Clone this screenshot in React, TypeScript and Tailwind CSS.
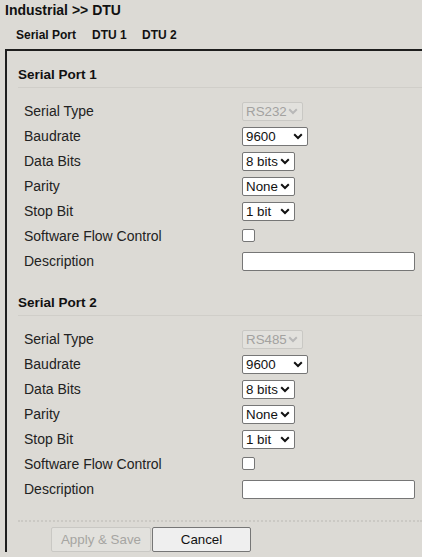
import React from "react";

const font = { fontFamily: '"Liberation Sans", Arial, sans-serif' };

function Chevron({ disabled }: { disabled?: boolean }) {
  return (
    <svg width="10" height="7" viewBox="0 0 10 7" className="shrink-0">
      <path
        d="M1.2 1.3 L5 5 L8.8 1.3"
        fill="none"
        stroke={disabled ? "#b8b8b8" : "#111"}
        strokeWidth="2"
      />
    </svg>
  );
}

function Select({ value, w, disabled }: { value: string; w: string; disabled?: boolean }) {
  return (
    <div
      className={
        "flex h-[19px] items-center justify-between rounded-[2px] border pl-[3px] pr-[4px] text-[13.33px] leading-none " +
        w +
        (disabled
          ? " border-[#c9c8c4] bg-[#e2e1dd] text-[#a3a2a0]"
          : " border-[#767676] bg-white text-[#111]")
      }
    >
      <span className="whitespace-pre">{value}</span>
      <Chevron disabled={disabled} />
    </div>
  );
}

function Row({ label, children }: { label: string; children: React.ReactNode }) {
  return (
    <div className="flex h-[25px] items-center">
      <div className="w-[224px] pl-[6px] text-[14px] text-[#222]">{label}</div>
      <div className="flex items-center">{children}</div>
    </div>
  );
}

function Section({ title, type }: { title: string; type: string }) {
  return (
    <div>
      <div className="border-b border-[#d0cec9] pb-[2px] text-[13.5px] font-bold leading-[20px] text-[#111]">
        {title}
      </div>
      <div className="mt-[11px]">
        <Row label="Serial Type">
          <Select value={type} w="w-[61px]" disabled />
        </Row>
        <Row label="Baudrate">
          <Select value="9600" w="w-[66px]" />
        </Row>
        <Row label="Data Bits">
          <Select value="8 bits" w="w-[53px]" />
        </Row>
        <Row label="Parity">
          <Select value="None" w="w-[53px]" />
        </Row>
        <Row label="Stop Bit">
          <Select value="1 bit" w="w-[53px]" />
        </Row>
        <Row label="Software Flow Control">
          <div className="mt-[-2px] h-[13px] w-[13px] rounded-[2px] border border-[#767676] bg-white" />
        </Row>
        <Row label="Description">
          <div className="h-[19px] w-[173px] rounded-[2px] border border-[#767676] bg-white" />
        </Row>
      </div>
    </div>
  );
}

export default function App() {
  return (
    <div className="h-[557px] w-full overflow-hidden bg-[#dcdad5]" style={font}>
      <div className="h-[20px] pl-[5px] text-[14px] font-bold leading-[20px] text-[#111]">
        Industrial &gt;&gt; DTU
      </div>
      <div className="mt-[5px] flex h-[20px] items-center pl-[16px] text-[12px] font-bold text-[#111]">
        <span className="w-[76px]">Serial Port</span>
        <span className="w-[50px]">DTU 1</span>
        <span>DTU 2</span>
      </div>
      <div className="ml-[5px] mt-[4px] border-l-2 border-t-2 border-[#1e1e1e] pl-[11px] pt-[14px]">
        <Section title="Serial Port 1" type="RS232" />
        <div className="mt-[19px]">
          <Section title="Serial Port 2" type="RS485" />
        </div>
        <div className="mt-[18px] border-t-2 border-dotted border-[#cbc9c4]" />
        <div className="mt-[5px] flex pl-[33px]">
          <div className="flex h-[25px] w-[100px] items-center justify-center rounded-[2px] border border-[#c9c8c4] bg-[#e2e1dd] text-[13.33px] text-[#a6a5a2]">
            Apply &amp; Save
          </div>
          <div className="ml-[1px] flex h-[25px] w-[99px] items-center justify-center rounded-[2px] border border-[#767676] bg-[#efefef] text-[13.33px] text-[#111]">
            Cancel
          </div>
        </div>
      </div>
    </div>
  );
}
